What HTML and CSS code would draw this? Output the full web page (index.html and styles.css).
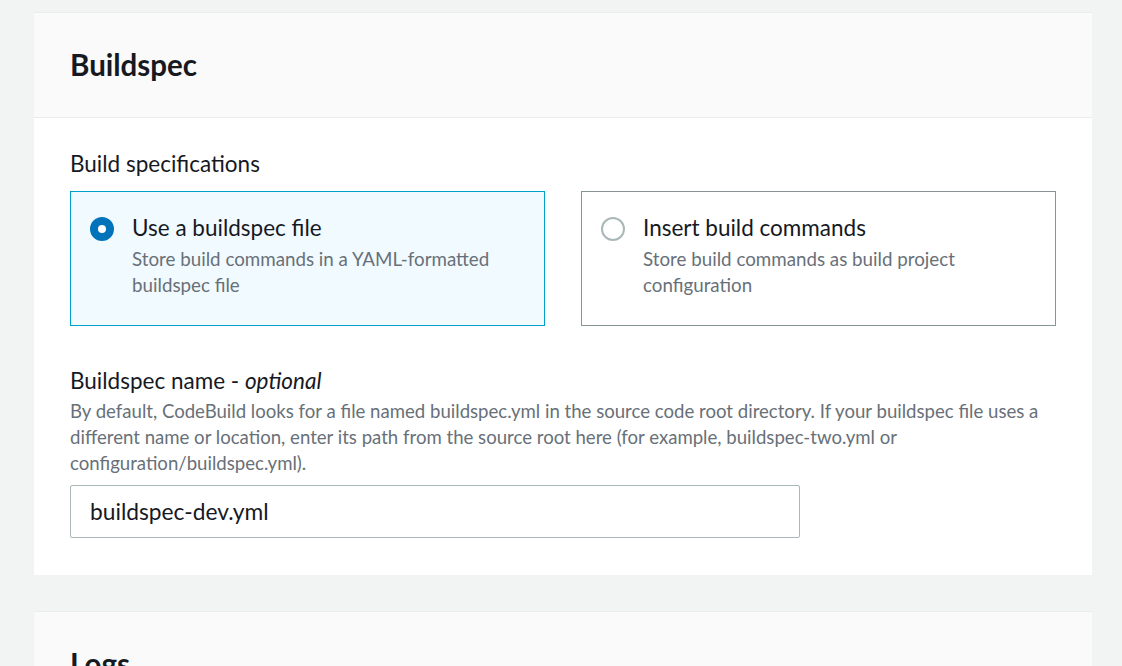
FILE: index.html
```html
<!DOCTYPE html>
<html lang="en">
<head>
<meta charset="utf-8">
<title>Buildspec</title>
<link rel="stylesheet" href="styles.css">
</head>
<body>
<main class="page">
  <section class="panel">
    <header class="panel-header">
      <h2 class="panel-title">Buildspec</h2>
    </header>
    <div class="panel-body">
      <div class="field-label">Build specifications</div>
      <div class="tiles">
        <label class="tile tile-selected">
          <span class="radio radio-on"></span>
          <span class="tile-text">
            <span class="tile-title">Use a buildspec file</span>
            <span class="tile-desc">Store build commands in a YAML-formatted buildspec file</span>
          </span>
        </label>
        <label class="tile">
          <span class="radio"></span>
          <span class="tile-text">
            <span class="tile-title">Insert build commands</span>
            <span class="tile-desc">Store build commands as build project configuration</span>
          </span>
        </label>
      </div>
      <div class="field">
        <div class="field-name">Buildspec name - <em>optional</em></div>
        <div class="field-help">By default, CodeBuild looks for a file named buildspec.yml in the source code root directory. If your buildspec file uses a different name or location, enter its path from the source root here (for example, buildspec-two.yml or configuration/buildspec.yml).</div>
        <div class="input">buildspec-dev.yml</div>
      </div>
    </div>
  </section>
  <section class="panel">
    <header class="panel-header">
      <h2 class="panel-title">Logs</h2>
    </header>
  </section>
</main>
</body>
</html>
```
FILE: styles.css
```css
html, body {
  margin: 0;
  padding: 0;
  background: #f2f3f3;
}
body {
  font-family: "Lato", "Open Sans", sans-serif;
  color: #16191f;
}
.page {
  padding: 12px 30px 0 34px;
  display: flex;
  flex-direction: column;
  gap: 36px;
}
.panel {
  background: #fff;
  border-top: 1px solid #eaeded;
}
.panel-header {
  background: #fafafa;
  border-bottom: 1px solid #eaeded;
  padding: 34px 36px 34px;
}
.panel-title {
  margin: 0;
  font-size: 29.5px;
  line-height: 36px;
  font-weight: 700;
  color: #16191f;
}
.panel-body {
  padding: 31px 36px 37px;
}
.field-label {
  font-size: 22.5px;
  line-height: 30px;
  margin-bottom: 12px;
}
.tiles {
  display: grid;
  grid-template-columns: 1fr 1fr;
  gap: 36px;
}
.tile {
  display: flex;
  align-items: flex-start;
  gap: 18px;
  border: 1px solid #879596;
  background: #fff;
  padding: 21px 19px 27px;
}
.tile-selected {
  border-color: #00a1c9;
  background: #f1faff;
}
.radio {
  flex: none;
  width: 24px;
  height: 24px;
  box-sizing: border-box;
  border-radius: 50%;
  border: 2px solid #aab7b8;
  background: #fff;
  margin-top: 4px;
}
.radio-on {
  border: 8px solid #0073bb;
}
.tile-text {
  display: flex;
  flex-direction: column;
}
.tile-title {
  font-size: 22.5px;
  line-height: 30px;
  margin-bottom: 3px;
}
.tile-desc {
  font-size: 18.75px;
  line-height: 26px;
  color: #687078;
}
.field {
  margin-top: 40px;
}
.field-name {
  font-size: 22.5px;
  line-height: 30px;
}
.field-name em {
  font-style: italic;
}
.field-help {
  font-size: 18.6px;
  line-height: 26px;
  color: #687078;
  margin-top: 2px;
}
.input {
  margin-top: 9px;
  width: 730px;
  height: 53px;
  box-sizing: border-box;
  border: 1px solid #aab7b8;
  border-radius: 2px;
  padding: 0 19px;
  display: flex;
  align-items: center;
  font-size: 22.75px;
  background: #fff;
}
```
